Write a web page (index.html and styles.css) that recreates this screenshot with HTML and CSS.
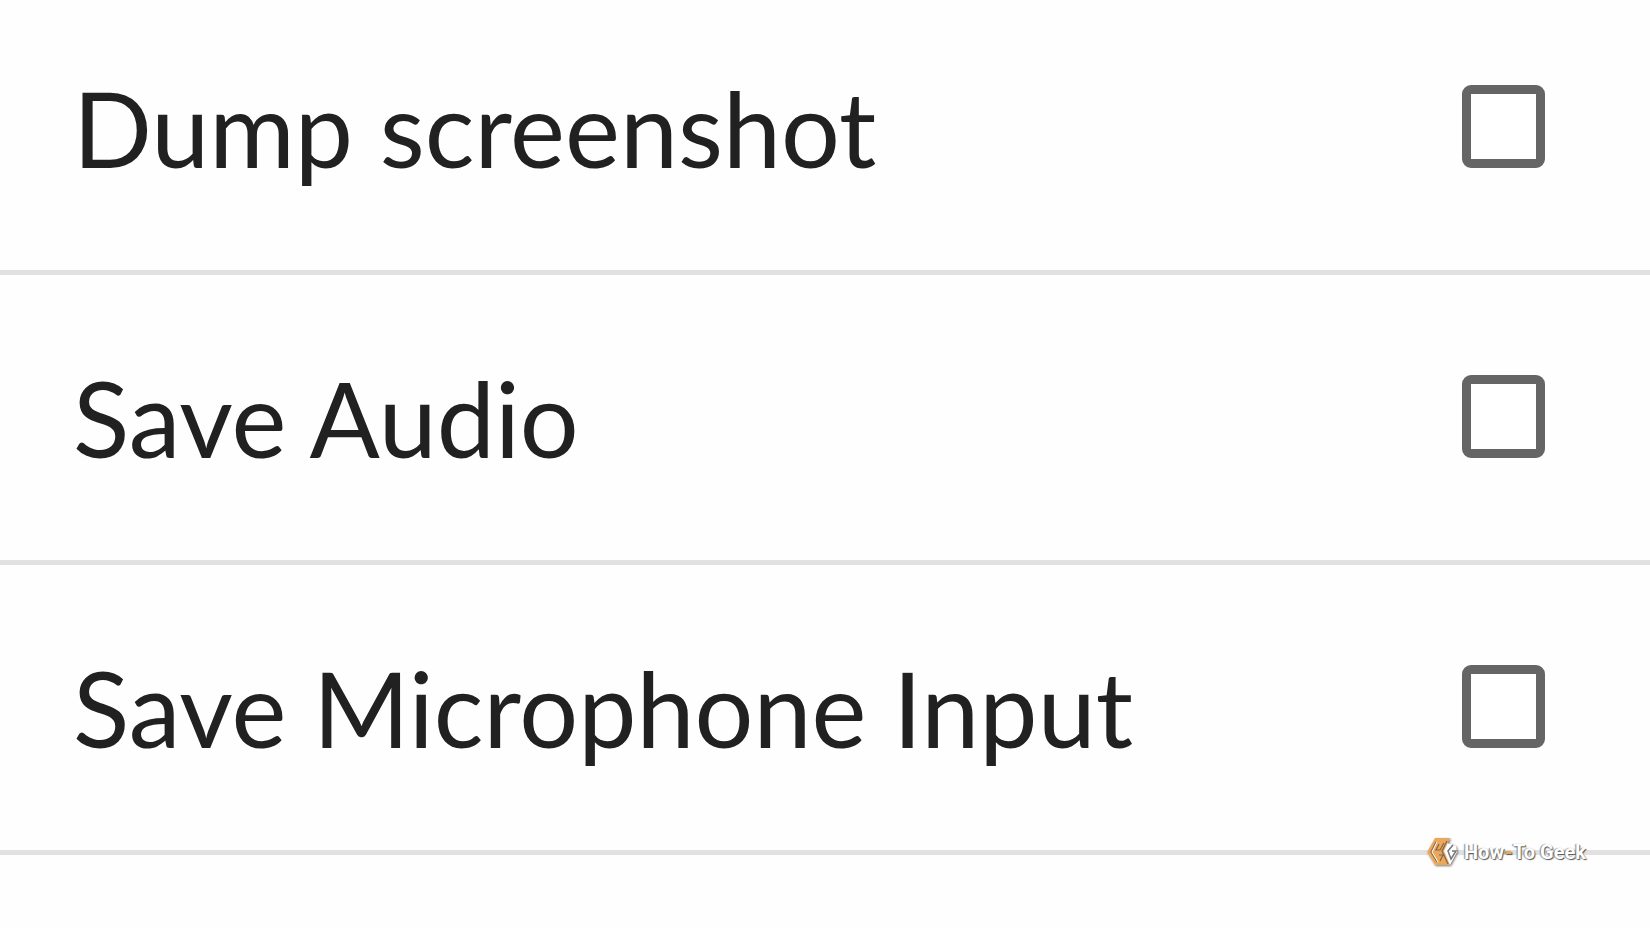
FILE: index.html
```html
<!DOCTYPE html>
<html lang="en">
<head>
  <meta charset="UTF-8">
  <meta name="viewport" content="width=device-width, initial-scale=1">
  <title>Save options</title>
  <link rel="stylesheet" href="styles.css">
</head>
<body>

  <form class="options">
    <div class="option">
      <label for="screenshot">Dump screenshot</label>
      <input type="checkbox" id="screenshot">
    </div>
    <div class="option">
      <label for="audio">Save Audio</label>
      <input type="checkbox" id="audio">
    </div>
    <div class="option">
      <label for="microphone">Save Microphone Input</label>
      <input type="checkbox" id="microphone">
    </div>
  </form>

  <div class="watermark">
    <svg class="logo" viewBox="0 0 32 32" aria-hidden="true">
      <path d="M9 2h15l-3 5 9 3 1 6-7 13H9L1 16z" fill="#fff"/>
      <path d="M9 2h15l-6 13 6 14H9L1 16z" fill="#eba75b"/>
      <path d="M10 6L5 16l6 10M13 8l-3 6h4l4-7M14 25l3-6h-4M21 5l-5 10 6 13" fill="none" stroke="#80684f" stroke-width="1.2"/>
      <path d="M11 6L6 16l6 10" fill="none" stroke="#fff"/>
      <path d="M27 9l-5 6 3 8 5-8h-4" fill="none" stroke="#777" stroke-width="1.5"/>
    </svg>
    <span>How<b>-</b>To Geek</span>
  </div>

</body>
</html>
```

FILE: styles.css
```css
* {
  box-sizing: border-box;
}

body {
  font-family: Lato, sans-serif;
  background-color: #fefefe;
  color: #212121;
  margin: 0;
  min-height: 100vh;
  position: relative;
}

.option {
  display: flex;
  align-items: center;
  justify-content: space-between;
  height: 290px;
  padding: 0 105px 2px 73px;
  border-bottom: 5px solid #e1e1e1;
}

/* the list starts a little above the first row's full height */
.option:first-child {
  height: 275px;
  padding-bottom: 17px;
}

.option label {
  font-size: 104px;
  line-height: 120px;
  padding-top: 2px;
  white-space: nowrap;
}

.option input {
  appearance: none;
  flex: none;
  width: 83px;
  height: 83px;
  margin: 0;
  border: 9px solid #656565;
  border-radius: 9px;
  background-color: #ffffff;
}

.option input:checked {
  background-color: #656565;
}

.watermark {
  position: absolute;
  right: 64px;
  bottom: 60px;
  display: flex;
  align-items: center;
  gap: 6px;
  color: #ffffff;
  font-family: Roboto, sans-serif;
  font-size: 20px;
  font-weight: bold;
  line-height: 32px;
  white-space: nowrap;
  text-shadow: 1px 1px 1px #555555, -1px 0 1px #888888;
}

.watermark b {
  color: #eba75b;
}

.logo {
  width: 32px;
  height: 32px;
  filter: drop-shadow(1px 1px 1px #777777);
}
```
